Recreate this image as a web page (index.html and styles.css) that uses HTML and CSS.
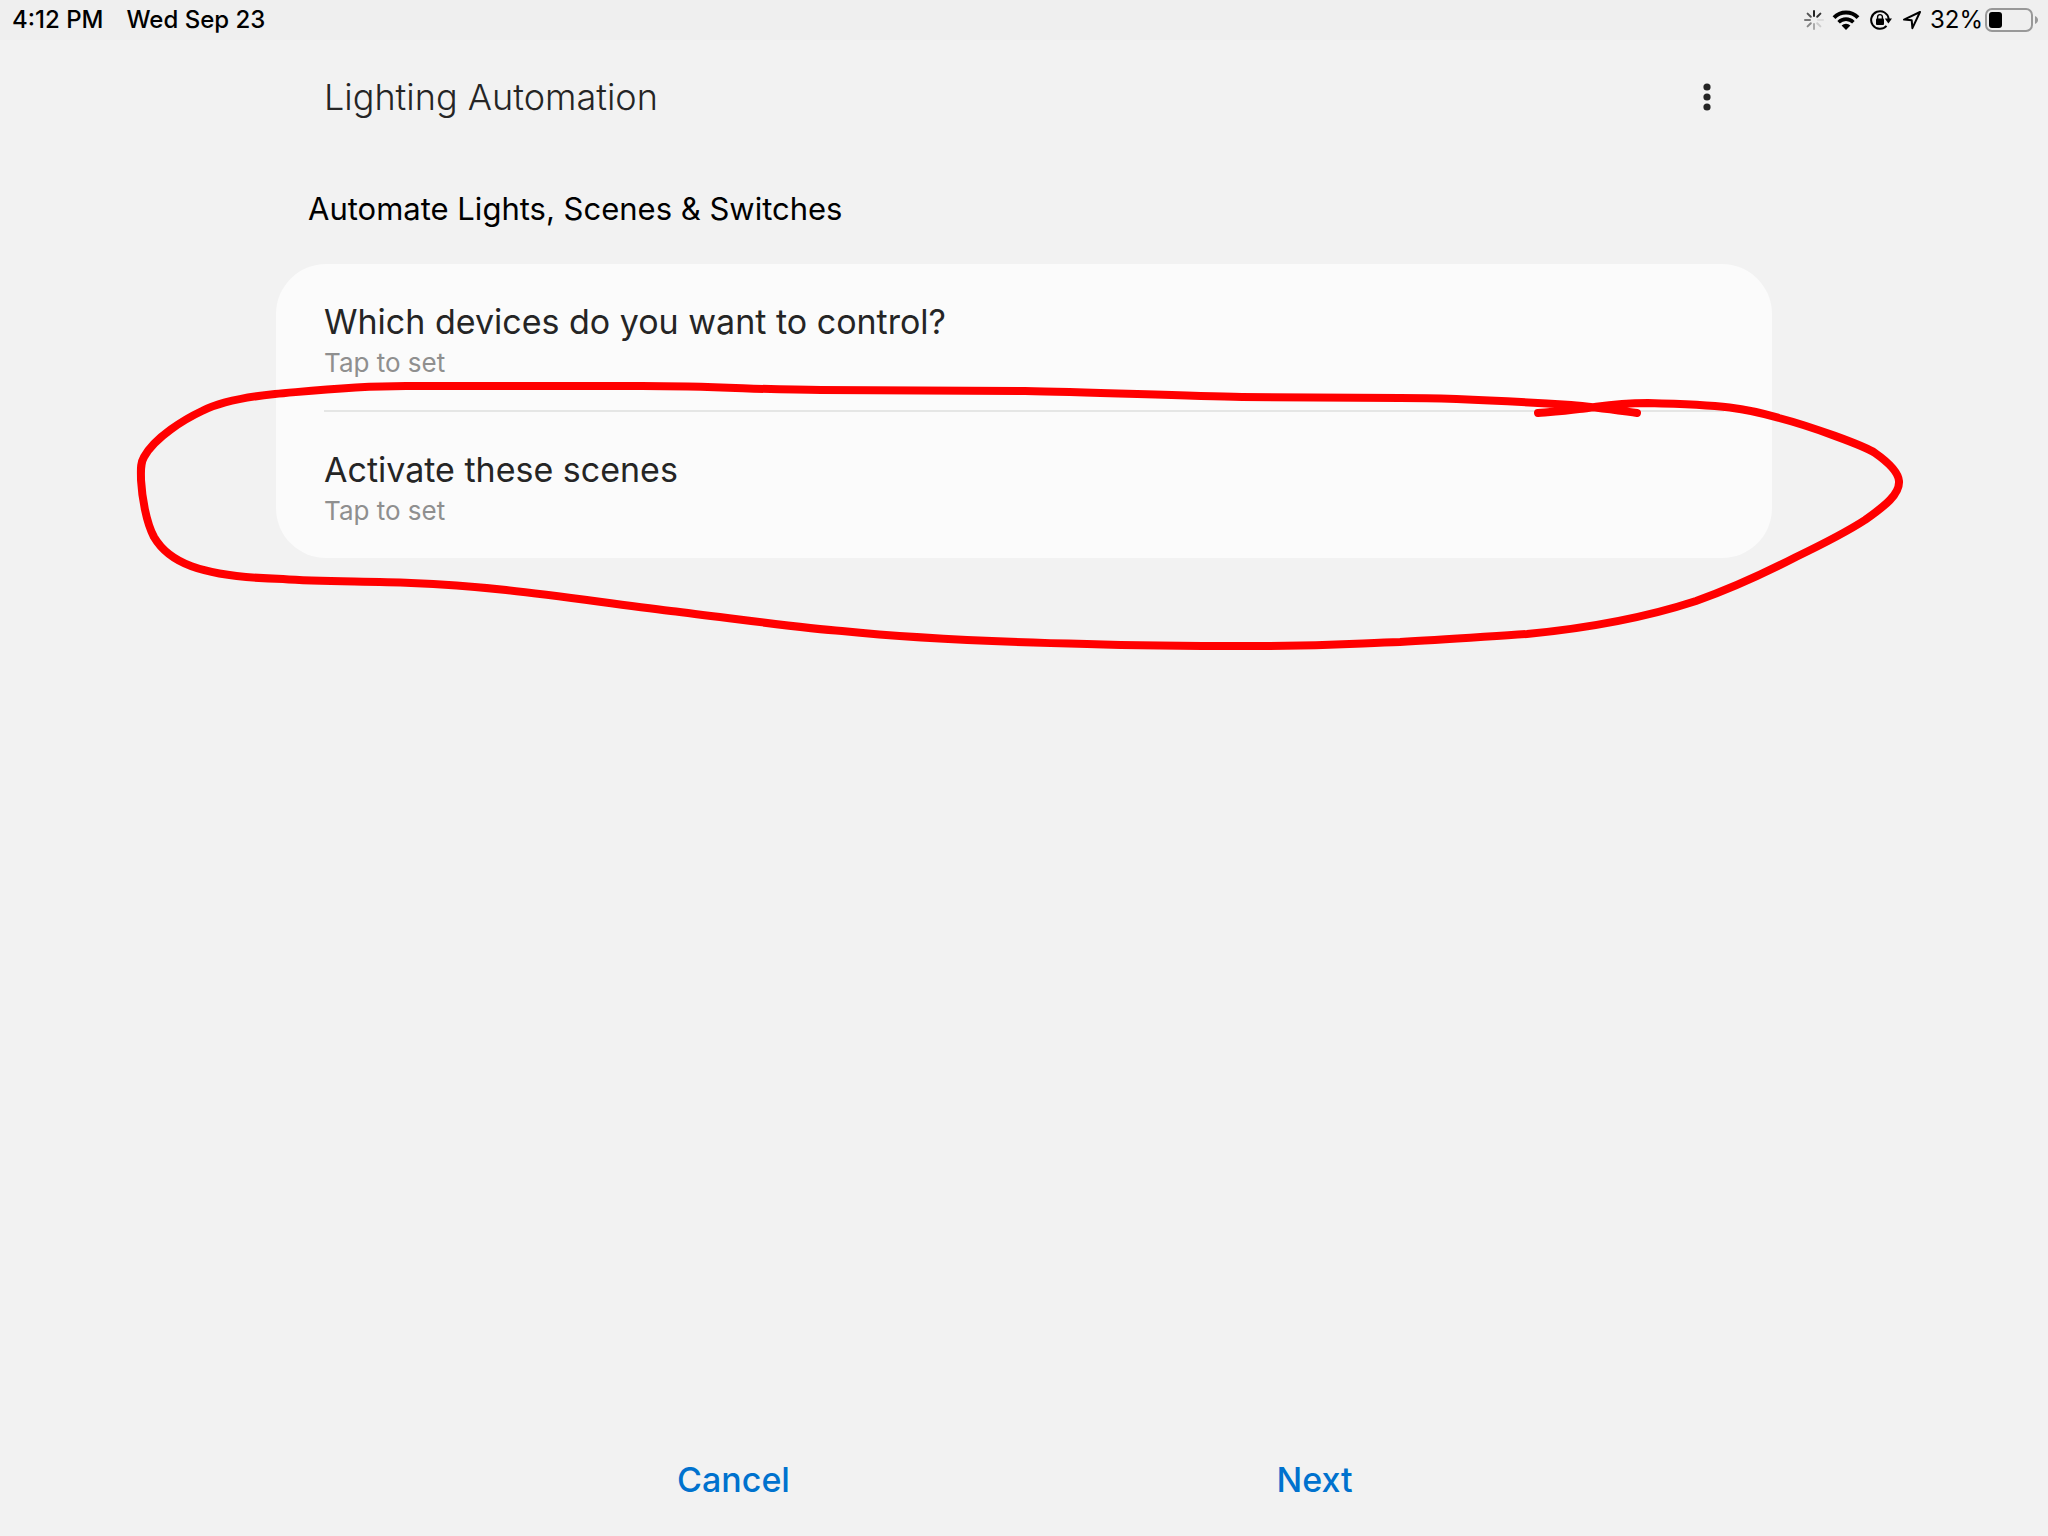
FILE: index.html
```html
<!DOCTYPE html>
<html lang="en">
<head>
<meta charset="utf-8">
<meta name="viewport" content="width=device-width, initial-scale=1">
<title>Lighting Automation</title>
<link rel="stylesheet" href="styles.css">
</head>
<body>
<div class="status-bar">
  <div class="status-group">
    <span>4:12 PM</span>
    <span>Wed Sep 23</span>
  </div>
  <div class="status-icons">
    <svg class="icon-spinner" width="20" height="20" viewBox="0 0 20 20" aria-hidden="true">
      <g fill="none" stroke-width="2" stroke-linecap="round">
        <path d="M10 1v5" stroke="#222"/>
        <path d="M16.4 3.6l-3.2 3.2" stroke="#333"/>
        <path d="M19 10h-5" stroke="#ddd"/>
        <path d="M16.4 16.4l-3.2-3.2" stroke="#ccc"/>
        <path d="M10 19v-5" stroke="#aaa"/>
        <path d="M3.6 16.4l3.2-3.2" stroke="#888"/>
        <path d="M1 10h5" stroke="#777"/>
        <path d="M3.6 3.6l3.2 3.2" stroke="#555"/>
      </g>
    </svg>
    <svg class="icon-wifi" width="28" height="20" viewBox="0 0 28 20" aria-hidden="true">
      <path d="M2 7.600a16.900 16.900 0 0 1 24 0" fill="none" stroke="#000" stroke-width="4"/>
      <path d="M6.600 12.200a10.500 10.500 0 0 1 14.800 0" fill="none" stroke="#000" stroke-width="3.600"/>
      <path d="M14 20l-4.400-4.400a6.200 6.200 0 0 1 8.800 0z"/>
    </svg>
    <svg class="icon-lock" width="22" height="20" viewBox="0 0 22 20" aria-hidden="true">
      <path d="M16.500 15.900A8.800 8.800 0 1 1 18.700 9" fill="none" stroke="#000" stroke-width="2"/>
      <path d="M14.800 8.600H22l-3.600 5z"/>
      <rect x="6" y="8.600" width="8" height="6.400" rx="1"/>
      <path d="M7.600 9V7a2.400 2.400 0 0 1 4.800 0v2" fill="none" stroke="#000" stroke-width="1.400"/>
    </svg>
    <svg class="icon-location" width="20" height="20" viewBox="0 0 20 20" aria-hidden="true">
      <path d="M18 2L2 9.600l7.700.7.700 7.900z" fill="none" stroke="#000" stroke-width="2" stroke-linejoin="round"/>
    </svg>
    <span class="battery-level">32%</span>
    <svg width="54" height="24" viewBox="0 0 54 24" aria-hidden="true">
      <rect x="1" y="1" width="46" height="22" rx="6" fill="none" stroke="#989898" stroke-width="2"/>
      <rect x="4" y="4" width="13" height="16" rx="3"/>
      <path d="M50 8c4 1.500 4 6.500 0 8z" fill="#989898"/>
    </svg>
  </div>
</div>

<div class="screen">
  <header class="title-bar">
    <h1 class="title">Lighting Automation</h1>
    <button class="menu-button" type="button" aria-label="More options">
      <svg width="8" height="28" viewBox="0 0 8 28" fill="#252525" aria-hidden="true">
        <circle cx="4" cy="4" r="3.600"/><circle cx="4" cy="14" r="3.600"/><circle cx="4" cy="24" r="3.600"/>
      </svg>
    </button>
  </header>
  <main>
    <h2 class="section-title">Automate Lights, Scenes &amp; Switches</h2>
    <div class="card">
      <button class="row" type="button">
        <span class="row-label">Which devices do you want to control?</span>
        <span class="row-value">Tap to set</span>
      </button>
      <button class="row" type="button">
        <span class="row-label">Activate these scenes</span>
        <span class="row-value">Tap to set</span>
      </button>
    </div>
  </main>
</div>

<footer class="actions">
  <button class="action" type="button">Cancel</button>
  <button class="action" type="button">Next</button>
</footer>

<svg class="annotation" viewBox="0 0 2048 700" aria-hidden="true">
  <path d="M1637 413C1615 410 1595 407 1571 405C1510 401 1450 398 1400 398L1242 397C1180 396 1090 392 1025 391L821 390C760 390 720 386 642 386L406 386C350 386 310 391 275 394C245 397 218 403 202 411C185 419 155 437 144 457C140 464 141 470 141 480C142 497 146 522 154 537C168 561 197 577 283 579C320 582 365 581 411 583C500 586 580 600 671 611C730 618 800 628 842 631C900 637 1000 642 1087 644C1150 646 1200 646 1250 646C1330 646 1360 643 1400 642C1440 640 1480 637 1527 634C1590 628 1650 616 1696 601C1730 589 1765 573 1796 557C1825 543 1845 533 1865 520C1885 506 1900 494 1899 481C1898 470 1885 460 1875 453C1865 446 1810 426 1779 418C1745 408 1725 405 1648 403C1610 403 1600 407 1579 409C1565 411 1550 412 1538 413"/>
</svg>
</body>
</html>
```
FILE: styles.css
```css
* {
  box-sizing: border-box;
}

body {
  margin: 0;
  min-height: 100vh;
  display: flex;
  flex-direction: column;
  position: relative;
  background: #f2f2f2;
  color: #252525;
  font-family: Inter, "Liberation Sans", sans-serif;
}

button {
  margin: 0;
  padding: 0;
  border: 0;
  background: none;
  color: inherit;
  font: inherit;
  cursor: pointer;
}

svg {
  display: block;
}

.status-bar {
  display: flex;
  justify-content: space-between;
  align-items: center;
  height: 40px;
  padding: 0 9px 0 12px;
  background: #efefef;
  color: #000;
  font-size: 24px;
  font-weight: 500;
  line-height: 40px;
}

.status-group {
  display: flex;
  gap: 23px;
}

.status-icons {
  display: flex;
  align-items: center;
}

.icon-spinner {
  margin-right: 8px;
}

.icon-wifi,
.icon-lock {
  margin-right: 10px;
}

.icon-location {
  margin-right: 8px;
}

.battery-level {
  margin-right: 2px;
  font-weight: 400;
}

.screen {
  width: calc(100% - 96px);
  max-width: 1496px;
  margin: 0 auto;
}

.title-bar {
  display: flex;
  justify-content: space-between;
  align-items: center;
  height: 114px;
  padding: 0 44px 0 48px;
}

.title {
  margin: 0;
  font-size: 36px;
  font-weight: 300;
}

.menu-button {
  display: flex;
  justify-content: center;
  align-items: center;
  width: 42px;
  height: 48px;
}

.section-title {
  margin: 0;
  padding: 32px;
  color: #000;
  font-size: 31px;
  font-weight: 400;
  line-height: 46px;
}

.card {
  padding: 0 48px;
  border-radius: 50px;
  background: #fbfbfb;
}

.row {
  display: flex;
  flex-direction: column;
  width: 100%;
  padding: 34px 0 30px;
  text-align: left;
}

.row + .row {
  border-top: 2px solid #e5e6e5;
}

.row-label {
  font-size: 34px;
  line-height: 48px;
}

.row-value {
  color: #8f8f8f;
  font-size: 26px;
  font-weight: 400;
  line-height: 34px;
}

.actions {
  display: flex;
  width: 100%;
  max-width: 1162px;
  margin: auto auto 0;
  padding-bottom: 21px;
}

.action {
  flex: 1;
  height: 72px;
  color: #0072ce;
  font-size: 34px;
  font-weight: 500;
}

.annotation {
  position: absolute;
  top: 0;
  left: 0;
  width: 100%;
  pointer-events: none;
}

.annotation path {
  fill: none;
  stroke: #f00;
  stroke-width: 8;
  stroke-linecap: round;
  stroke-linejoin: round;
}
```
